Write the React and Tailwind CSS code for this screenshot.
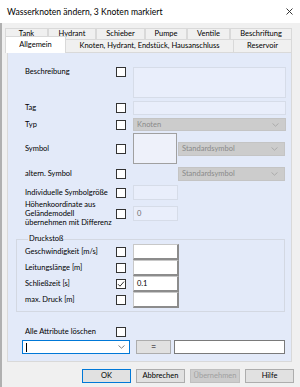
import React from "react";

function Check({ checked }) {
  return (
    <div className="w-[10px] h-[10px] border border-[#333333] bg-white flex items-center justify-center shrink-0">
      {checked && (
        <svg width="8" height="8" viewBox="0 0 8 8">
          <path d="M1 4.2 L3 6.2 L7 1.6" stroke="#333333" fill="none" strokeWidth="1" />
        </svg>
      )}
    </div>
  );
}

function Chevron({ color = "#9a9a9a" }) {
  return (
    <svg width="7" height="4" viewBox="0 0 7 4" className="shrink-0">
      <path d="M0.5 0.5 L3.5 3.2 L6.5 0.5" stroke={color} fill="none" strokeWidth="0.9" />
    </svg>
  );
}

function GraySelect({ text, className }) {
  return (
    <div className={"flex items-center justify-between bg-[#cccccc] border border-[#c4c4c4] pl-[3px] pr-[6px] text-[#8a8a8a] " + className}>
      <span>{text}</span>
      <Chevron color="#a8a8a8" />
    </div>
  );
}

function Tab({ children, w, selected }) {
  return (
    <div
      className={
        "flex items-center justify-center border-t border-l border-r border-[#d9d9d9] whitespace-nowrap " +
        (selected ? "bg-white h-[17px] -mb-[1px] relative z-10" : "bg-[#f0f0f0]")
      }
      style={{ width: w }}
    >
      {children}
    </div>
  );
}

function GroupRow({ label, value, checked }) {
  return (
    <div className="flex items-center h-[16px]">
      <div className="w-[91px] whitespace-nowrap">{label}</div>
      <div className="w-[17px]">
        <Check checked={checked} />
      </div>
      <div className="w-[46px] h-[16px] bg-white border border-[#c8c8c8] border-r-2 border-b-2 border-r-[#8c8c8c] border-b-[#8c8c8c] flex items-center pl-[3px]">
        {value}
      </div>
    </div>
  );
}

export default function App() {
  return (
    <div className="w-[300px] h-[387px] overflow-hidden bg-[#f0f0f0] text-black text-[7.5px] leading-[10px] font-['Lato',sans-serif]">
      {/* Title bar */}
      <div className="h-[23px] bg-white flex items-center justify-between pl-[7px] pr-[7px]">
        <span className="text-[8.6px]">Wasserknoten ändern, 3 Knoten markiert</span>
        <svg width="7" height="7" viewBox="0 0 7 7">
          <path d="M0.5 0.5 L6.5 6.5 M6.5 0.5 L0.5 6.5" stroke="#222" strokeWidth="0.9" />
        </svg>
      </div>

      <div className="h-[364px] border-l-2 border-[#b0b0b0] flex flex-col">
        <div className="pl-[3px] pr-[8px] pt-[5px]">
          {/* Tabs row 1 */}
          <div className="flex h-[11px]">
            <Tab w={43}>Tank</Tab>
            <Tab w={48}>Hydrant</Tab>
            <Tab w={49}>Schieber</Tab>
            <Tab w={42}>Pumpe</Tab>
            <Tab w={43}>Ventile</Tab>
            <Tab w={62}>Beschriftung</Tab>
          </div>
          {/* Tabs row 2 */}
          <div className="flex h-[13px] items-end">
            <Tab w={61} selected>
              Allgemein
            </Tab>
            <div className="w-[168px] h-[13px] flex items-center justify-center border-t border-r border-[#d9d9d9] bg-[#f0f0f0] whitespace-nowrap">
              Knoten, Hydrant, Endstück, Hausanschluss
            </div>
            <div className="w-[58px] h-[13px] flex items-center justify-center border-t border-r border-[#d9d9d9] bg-[#f0f0f0]">
              Reservoir
            </div>
          </div>

          {/* Panel */}
          <div className="ml-[2px] w-[285px] h-[310px] bg-[#e3eaf9] border border-[#d9d9d9] flex flex-col">
            <div className="pl-[17px] pt-[14px] flex flex-col">
              {/* Beschreibung */}
              <div className="flex items-start">
                <div className="w-[91px] pt-0">Beschreibung</div>
                <div className="w-[17px]">
                  <Check />
                </div>
                <div className="w-[153px] h-[31px] bg-[#e9eefb] border border-[#d6dce8]" />
              </div>
              {/* Tag */}
              <div className="flex items-center mt-[3px] h-[14px]">
                <div className="w-[91px]">Tag</div>
                <div className="w-[17px]">
                  <Check />
                </div>
                <div className="w-[153px] h-[14px] bg-[#e9eefb] border border-[#d6dce8]" />
              </div>
              {/* Typ */}
              <div className="flex items-center mt-[3px] h-[13px]">
                <div className="w-[91px]">Typ</div>
                <div className="w-[17px]">
                  <Check />
                </div>
                <GraySelect text="Knoten" className="w-[153px] h-[13px]" />
              </div>
              {/* Symbol */}
              <div className="flex items-center mt-[2px] h-[31px]">
                <div className="w-[91px]">Symbol</div>
                <div className="w-[17px]">
                  <Check />
                </div>
                <div className="w-[44px] h-[31px] bg-[#eef1fa] border border-[#a0a0a0]" />
                <GraySelect text="Standardsymbol" className="ml-[1px] w-[107px] h-[14px]" />
              </div>
              {/* altern. Symbol */}
              <div className="flex items-center mt-[3px] h-[14px]">
                <div className="w-[91px]">altern. Symbol</div>
                <div className="w-[17px]">
                  <Check />
                </div>
                <GraySelect text="Standardsymbol" className="ml-[45px] w-[107px] h-[14px]" />
              </div>
              {/* Individuelle Symbolgröße */}
              <div className="flex items-center mt-[4px] h-[15px]">
                <div className="w-[91px] whitespace-nowrap">Individuelle Symbolgröße</div>
                <div className="w-[17px]">
                  <Check />
                </div>
                <div className="w-[45px] h-[15px] bg-[#e9eefb] border border-[#d6dce8]" />
              </div>
              {/* Höhenkoordinate */}
              <div className="flex items-center h-[27px]">
                <div className="w-[91px] leading-[9px] whitespace-nowrap">
                  Höhenkoordinate aus
                  <br />
                  Geländemodell
                  <br />
                  übernehmen mit Differenz
                </div>
                <div className="w-[17px]">
                  <Check />
                </div>
                <div className="w-[45px] h-[15px] bg-[#e9eefb] border border-[#d6dce8] flex items-center pl-[3px] text-[#6d6d6d]">
                  0
                </div>
              </div>
            </div>

            {/* Druckstoß group */}
            <fieldset className="ml-[8px] mt-[7px] w-[269px] border border-[#d3d8e2] pl-[8px] pb-[3px]">
              <legend className="ml-[3px] px-[1px] leading-[10px]">Druckstoß</legend>
              <GroupRow label="Geschwindigkeit [m/s]" />
              <GroupRow label="Leitungslänge [m]" />
              <GroupRow label="Schließzeit [s]" value="0.1" checked />
              <GroupRow label="max. Druck [m]" />
            </fieldset>

            {/* Alle Attribute löschen */}
            <div className="flex items-center pl-[17px] mt-[15px] h-[10px]">
              <div className="w-[91px] whitespace-nowrap">Alle Attribute löschen</div>
              <Check />
            </div>

            {/* Combo row */}
            <div className="flex items-center pl-[14px] mt-[3px] h-[14px]">
              <div className="w-[108px] h-[14px] bg-white border border-[#0078d7] flex items-center justify-between pl-[3px] pr-[4px]">
                <div className="w-[1px] h-[9px] bg-black" />
                <Chevron color="#707070" />
              </div>
              <div className="ml-[6px] w-[35px] h-[14px] bg-[#e1e1e1] border border-[#adadad] flex items-center justify-center text-[9px]">
                =
              </div>
              <div className="ml-[3px] w-[111px] h-[14px] bg-white border border-[#7a7a7a]" />
            </div>
          </div>
        </div>

        {/* Buttons */}
        <div className="flex pl-[80px] mt-[7px] gap-[5px]">
          <div className="w-[49px] h-[14px] bg-[#e1e1e1] border border-[#0078d7] flex items-center justify-center">OK</div>
          <div className="w-[49px] h-[14px] bg-[#e1e1e1] border border-[#adadad] flex items-center justify-center">Abbrechen</div>
          <div className="w-[50px] h-[14px] bg-[#cccccc] border border-[#bfbfbf] flex items-center justify-center text-[#a0a0a0]">Übernehmen</div>
          <div className="w-[49px] h-[14px] bg-[#e1e1e1] border border-[#adadad] flex items-center justify-center">Hilfe</div>
        </div>
      </div>
    </div>
  );
}
